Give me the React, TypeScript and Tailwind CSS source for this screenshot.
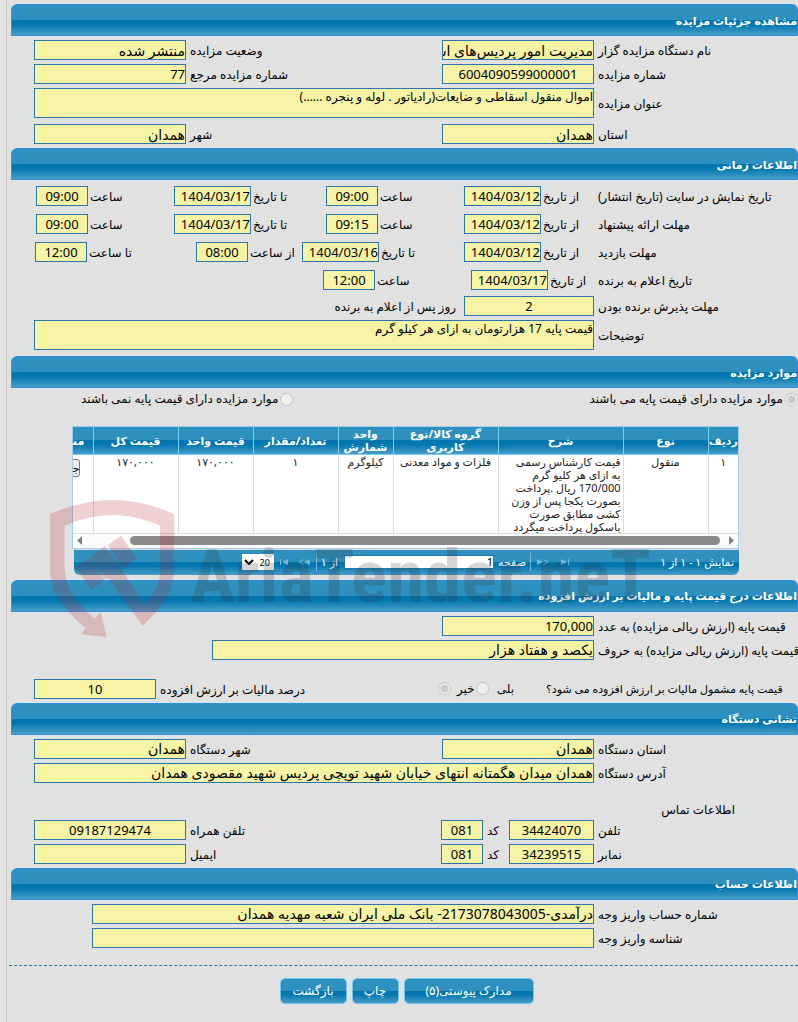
import React, { useId } from "react";
import clsx from "clsx";

const barStyle =
  "bg-[linear-gradient(to_bottom,#2e90be_0%,#2e90be_50%,#0075ae_50%,#0378b0_65%,#4a9cc6_100%)]";

interface SectionProps {
  title: string;
  children: React.ReactNode;
}

const Section: React.FC<SectionProps> = ({ title, children }) => (
  <section>
    <h2
      className={clsx(
        "ml-1 flex h-8 items-center rounded-t-md border border-[#2a94e4] pt-0.5 text-[11px] font-bold text-white",
        barStyle,
      )}
    >
      {title}
    </h2>
    {children}
  </section>
);

interface RowProps {
  className?: string;
  children: React.ReactNode;
}

const Row: React.FC<RowProps> = ({ className = "mt-1", children }) => (
  <div className={clsx("flex pl-[27px]", className)}>{children}</div>
);

const RowTitle: React.FC<{ children: React.ReactNode }> = ({ children }) => (
  <span className="ml-1 flex w-[200px] shrink-0 items-center justify-end pt-0.5 whitespace-nowrap">
    {children}
  </span>
);

interface FieldProps {
  label: string;
  value: string;
  labelClass?: string;
  inputClass?: string;
  area?: boolean;
  tight?: boolean;
}

const inputBase =
  "block min-w-0 resize-none overflow-hidden border border-[#2678ab] bg-[#f7f4a5] text-black outline-none";

const Field: React.FC<FieldProps> = ({
  label,
  value,
  labelClass = "w-[200px]",
  inputClass = "w-[152px]",
  area,
  tight,
}) => {
  const id = useId();
  const hasPersian = /[آ-ی]/.test(value);

  return (
    <>
      <label
        htmlFor={id}
        className={clsx(
          "flex shrink-0 items-center justify-end pt-0.5 whitespace-nowrap",
          tight ? "ml-0.5" : "ml-1",
          labelClass,
        )}
      >
        {label}
      </label>
      {area ? (
        <textarea
          id={id}
          readOnly
          defaultValue={value}
          className={clsx(inputBase, "h-[30px] text-[12px] leading-4", inputClass)}
        />
      ) : (
        <input
          id={id}
          readOnly
          defaultValue={value}
          className={clsx(
            inputBase,
            "h-5",
            hasPersian ? "text-[14px]" : "text-[13px]",
            inputClass,
          )}
        />
      )}
    </>
  );
};

const farLabel = "flex-1";
const centered = "w-[152px] text-center";
const dateInput = "w-[77px] shrink-0";
const timeInput = "w-[52px] shrink-0 text-center";

interface PeriodRowProps {
  title: string;
  from: [string, string];
  to: [string, string];
  className: string;
}

const PeriodRow: React.FC<PeriodRowProps> = ({ title, from, to, className }) => (
  <Row className={className}>
    <RowTitle>{title}</RowTitle>
    <Field tight label="از تاریخ" value={from[0]} labelClass="w-[51px]" inputClass={dateInput} />
    <Field tight label="ساعت" value={from[1]} labelClass="w-[84px]" inputClass={timeInput} />
    <Field tight label="تا تاریخ" value={to[0]} labelClass="w-[73px]" inputClass={dateInput} />
    <Field tight label="ساعت" value={to[1]} labelClass="w-[84px]" inputClass={timeInput} />
  </Row>
);

interface Column {
  title: string;
  width: string;
  value: string;
}

const columns: Column[] = [
  { title: "ردیف", width: "w-[30px]", value: "۱" },
  { title: "نوع", width: "w-[85px]", value: "منقول" },
  {
    title: "شرح",
    width: "w-[125px]",
    value:
      "قیمت کارشناس رسمی\nبه ازای هر کلیو گرم\n170/000 ریال .پرداخت\nبصورت یکجا پس از وزن\nکشی مطابق صورت\nباسکول پرداخت میگردد",
  },
  { title: "گروه کالا/نوع\nکاربری", width: "w-[105px]", value: "فلزات و مواد معدنی" },
  { title: "واحد\nشمارش", width: "w-[55px]", value: "کیلوگرم" },
  { title: "تعداد/مقدار", width: "w-[85px]", value: "۱" },
  { title: "قیمت واحد", width: "w-[75px]", value: "۱۷۰,۰۰۰" },
  { title: "قیمت کل", width: "w-[85px]", value: "۱۷۰,۰۰۰" },
  { title: "مشاهده", width: "w-[60px]", value: "جزئیات" },
];

const ItemsTable: React.FC = () => (
  <div className="mr-[59px] ml-[65px] overflow-hidden border border-[#a3cfeb] bg-white">
    <table className="w-[705px] table-fixed border-collapse text-[11px] leading-[13px]">
      <thead>
        <tr className={clsx("h-[27px] text-white", barStyle)}>
          {columns.map(({ title, width }) => (
            <th
              key={title}
              className={clsx(
                "border-b border-l border-[#79d0f5] p-0 font-bold whitespace-pre",
                width,
              )}
            >
              {title}
            </th>
          ))}
        </tr>
      </thead>
      <tbody>
        <tr className="align-top text-[#222]">
          {columns.map(({ title, value }, i) => (
            <td
              key={title}
              className={clsx(
                "border-b border-l border-[#ddd] p-0 whitespace-pre",
                i === 2 ? "pr-0.5 text-right" : "text-center",
              )}
            >
              {title === "مشاهده" ? (
                <button
                  type="button"
                  className="mt-1 h-[18px] rounded-[3px] border border-[#767676] bg-[#efefef] text-black"
                >
                  {value}
                </button>
              ) : (
                value
              )}
            </td>
          ))}
        </tr>
      </tbody>
    </table>
    <div className="flex h-[14px] items-center bg-[#fcfcfc] px-1">
      <svg width="5" height="9" viewBox="0 0 5 9" aria-hidden="true">
        <path d="M0 0L5 4.500L0 9Z" fill="#7f7f7f" />
      </svg>
      <div className="mr-[9px] ml-12 h-[9px] flex-1 rounded-full bg-[#8a8a8a]" />
      <svg width="5" height="9" viewBox="0 0 5 9" aria-hidden="true">
        <path d="M5 0L0 4.500L5 9Z" fill="#7f7f7f" />
      </svg>
    </div>
  </div>
);

interface PageButtonProps {
  label: string;
  children: React.ReactNode;
}

const PageButton: React.FC<PageButtonProps> = ({ label, children }) => (
  <button type="button" disabled aria-label={label} className="text-[#6fb6d8]">
    <svg width="12" height="6" viewBox="0 0 12 6" fill="none" stroke="currentColor">
      {children}
    </svg>
  </button>
);

const Pager: React.FC = () => (
  <div
    className={clsx(
      "mt-px mr-[59px] mb-[5px] ml-[67px] flex h-[25px] items-center rounded-b-md pr-[5px] text-[11px] text-white",
      barStyle,
    )}
  >
    <span className="w-[163px]">نمایش ۱ - ۱ از ۱</span>
    <PageButton label="آخرین صفحه">
      <path d="M2 0L8 3L2 6Z" fill="currentColor" stroke="none" />
      <path d="M9.500 0V6" />
    </PageButton>
    <span className="w-2.5" />
    <PageButton label="صفحه بعد">
      <path d="M0 0L6 3L0 6Z" fill="currentColor" stroke="none" />
      <path d="M6.500 0.500L11 3L6.500 5.500" />
    </PageButton>
    <span className="mr-1.5 ml-1 h-[18px] w-px bg-[#7fb4d0]" />
    <label htmlFor="page" className="ml-1 w-[28px] whitespace-nowrap">
      صفحه
    </label>
    <input
      id="page"
      defaultValue="1"
      className="h-[14px] w-[150px] min-w-0 border border-[#2678ab] bg-white text-black"
    />
    <span className="mr-1.5 whitespace-nowrap">از ۱</span>
    <span className="mr-1 ml-1.5 h-[18px] w-px bg-[#7fb4d0]" />
    <PageButton label="صفحه قبل">
      <path d="M12 0L6 3L12 6Z" fill="currentColor" stroke="none" />
      <path d="M5.500 0.500L1 3L5.500 5.500" />
    </PageButton>
    <span className="w-2" />
    <PageButton label="اولین صفحه">
      <path d="M10 0L4 3L10 6Z" fill="currentColor" stroke="none" />
      <path d="M2.500 0V6" />
    </PageButton>
    <select
      aria-label="تعداد در صفحه"
      defaultValue="20"
      className="mr-1 h-4 w-8 bg-white text-[9px] text-black"
    >
      <option>20</option>
    </select>
  </div>
);

const Watermark: React.FC = () => (
  <div
    dir="ltr"
    aria-hidden="true"
    className="pointer-events-none absolute top-[490px] left-10 flex items-start opacity-20"
  >
    <svg width="150" height="155" viewBox="0 0 450 465" fill="#b81d24">
      <path d="M30 73Q217 -13 403 73V235C400 300 375 345 308 407L205 265L195 268L152 200L195 168L245 240L312 342C345 310 360 280 360 235V107Q217 43 74 107V235C78 295 105 335 163 385L182 366L200 441L122 433L137 415C70 355 30 310 30 235Z" />
      <path d="M203 165L243 137L290 205L249 237Z" />
      <path d="M106 230L150 202L193 270L155 300Z" />
    </svg>
    <span className="mt-6 font-['Roboto_Condensed','Open_Sans_Condensed','Noto_Sans_Condensed','Roboto',sans-serif] text-[75px] leading-[124px] font-bold text-[#333]">
      AriaTender.neT
    </span>
  </div>
);

interface ActionButtonProps {
  width: string;
  children: React.ReactNode;
}

const ActionButton: React.FC<ActionButtonProps> = ({ width, children }) => (
  <button
    type="button"
    className={clsx(
      "h-[26px] rounded-[5px] border border-[#6cc8f0] text-[12px] text-white",
      barStyle,
      width,
    )}
  >
    {children}
  </button>
);

const App: React.FC = () => (
  <div
    dir="rtl"
    lang="fa"
    className="relative min-h-screen overflow-hidden bg-[#e1e1e1] pl-1.5 font-['Noto_Sans','DejaVu_Sans',sans-serif] text-[12px] text-black"
  >
    <main className="min-h-screen border-l border-[#c9c9c9] pt-1">
      <Section title="مشاهده جزئیات مزایده">
        <Row>
          <Field label="نام دستگاه مزایده گزار" value="مدیریت امور پردیس‌های استان همدان" />
          <Field label="وضعیت مزایده" value="منتشر شده" labelClass={farLabel} />
        </Row>
        <Row>
          <Field label="شماره مزایده" value="6004090599000001" inputClass={centered} />
          <Field label="شماره مزایده مرجع" value="77" labelClass={farLabel} />
        </Row>
        <Row>
          <Field
            area
            label="عنوان مزایده"
            value="اموال منقول اسقاطی و ضایعات(رادیاتور . لوله و پنجره ......)"
            inputClass="flex-1"
          />
        </Row>
        <Row className="mt-1.5 mb-1">
          <Field label="استان" value="همدان" />
          <Field label="شهر" value="همدان" labelClass={farLabel} />
        </Row>
      </Section>

      <Section title="اطلاعات زمانی">
        <PeriodRow
          className="mt-1.5"
          title="تاریخ نمایش در سایت (تاریخ انتشار)"
          from={["1404/03/12", "09:00"]}
          to={["1404/03/17", "09:00"]}
        />
        <PeriodRow
          className="mt-2"
          title="مهلت ارائه پیشنهاد"
          from={["1404/03/12", "09:15"]}
          to={["1404/03/17", "09:00"]}
        />
        <Row className="mt-2">
          <RowTitle>مهلت بازدید</RowTitle>
          <Field tight label="از تاریخ" value="1404/03/12" labelClass="w-[51px]" inputClass={dateInput} />
          <Field tight label="تا تاریخ" value="1404/03/16" labelClass="w-[83px]" inputClass={dateInput} />
          <Field tight label="از ساعت" value="08:00" labelClass="w-[52px]" inputClass={timeInput} />
          <Field tight label="تا ساعت" value="12:00" labelClass="w-[107px]" inputClass={timeInput} />
        </Row>
        <Row className="mt-2">
          <RowTitle>تاریخ اعلام به برنده</RowTitle>
          <Field tight label="از تاریخ" value="1404/03/17" labelClass="w-[44px]" inputClass={dateInput} />
          <Field tight label="ساعت" value="12:00" labelClass="w-[94px]" inputClass={timeInput} />
        </Row>
        <Row className="mt-1.5">
          <Field label="مهلت پذیرش برنده بودن" value="2" inputClass="w-[130px] text-center" />
          <span className="mr-2 flex items-center pt-0.5">روز پس از اعلام به برنده</span>
        </Row>
        <Row className="mt-1 mb-1.5">
          <Field
            area
            label="توضیحات"
            value="قیمت پایه 17 هزارتومان به ازای هر کیلو گرم"
            inputClass="flex-1"
          />
        </Row>
      </Section>

      <Section title="موارد مزایده">
        <div className="flex h-[38px] items-start pt-0.5 pl-[74px]">
          <label className="flex flex-1 items-center gap-0.5">
            <input type="radio" name="hasBasePrice" disabled defaultChecked className="size-[13px]" />
            موارد مزایده دارای قیمت پایه می باشند
          </label>
          <label className="flex items-center gap-0.5">
            <input type="radio" name="hasBasePrice" disabled className="size-[13px]" />
            موارد مزایده دارای قیمت پایه نمی باشند
          </label>
        </div>
        <ItemsTable />
        <Pager />
      </Section>

      <Section title="اطلاعات درج قیمت پایه و مالیات بر ارزش افزوده">
        <Row>
          <Field label="قیمت پایه (ارزش ریالی مزایده) به عدد" value="170,000" />
        </Row>
        <Row>
          <Field
            label="قیمت پایه (ارزش ریالی مزایده) به حروف"
            value="یکصد و هفتاد هزار"
            inputClass="w-[382px]"
          />
        </Row>
        <Row className="mt-[19px] mb-1">
          <span className="flex w-[252px] shrink-0 items-center justify-end pt-0.5 text-[11px] whitespace-nowrap">
            قیمت پایه مشمول مالیات بر ارزش افزوده می شود؟
          </span>
          <label className="mr-8 flex items-center gap-2">
            بلی
            <input type="radio" name="vat" disabled className="size-[13px]" />
          </label>
          <label className="mr-px flex items-center gap-1.5">
            خیر
            <input type="radio" name="vat" disabled defaultChecked className="size-[13px]" />
          </label>
          <Field
            label="درصد مالیات بر ارزش افزوده"
            value="10"
            labelClass={farLabel}
            inputClass="w-[122px] text-center"
          />
        </Row>
      </Section>

      <Section title="نشانی دستگاه">
        <Row>
          <Field label="استان دستگاه" value="همدان" />
          <Field label="شهر دستگاه" value="همدان" labelClass={farLabel} />
        </Row>
        <Row>
          <Field
            label="آدرس دستگاه"
            value="همدان میدان هگمتانه انتهای خیابان شهید توپچی پردیس شهید مقصودی همدان"
            inputClass="flex-1"
          />
        </Row>
        <h3 className="flex h-[37px] items-end pr-[63px] leading-5">اطلاعات تماس</h3>
        <Row className="">
          <Field label="تلفن" value="34424070" inputClass="w-[85px] text-center" />
          <Field label="کد" value="081" labelClass="w-[22px]" inputClass="w-[42px] text-center" />
          <Field label="تلفن همراه" value="09187129474" labelClass={farLabel} inputClass={centered} />
        </Row>
        <Row className="mt-1 mb-1">
          <Field label="نمابر" value="34239515" inputClass="w-[85px] text-center" />
          <Field label="کد" value="081" labelClass="w-[22px]" inputClass="w-[42px] text-center" />
          <Field label="ایمیل" value="" labelClass={farLabel} inputClass={centered} />
        </Row>
      </Section>

      <Section title="اطلاعات حساب">
        <Row>
          <Field
            label="شماره حساب واریز وجه"
            value="درآمدی-2173078043005- بانک ملی ایران شعبه مهدیه همدان"
            inputClass="w-[502px]"
          />
        </Row>
        <Row>
          <Field label="شناسه واریز وجه" value="" inputClass="w-[502px]" />
        </Row>
      </Section>

      <div className="mt-[17px] ml-0.5 border-t border-dashed border-[#2678ab]" />
      <div className="mt-3 flex justify-center gap-[5px] pl-2">
        <ActionButton width="w-[130px]">مدارک پیوستی(۵)</ActionButton>
        <ActionButton width="w-[47px]">چاپ</ActionButton>
        <ActionButton width="w-[67px]">بازگشت</ActionButton>
      </div>
    </main>
    <Watermark />
  </div>
);

export default App;
